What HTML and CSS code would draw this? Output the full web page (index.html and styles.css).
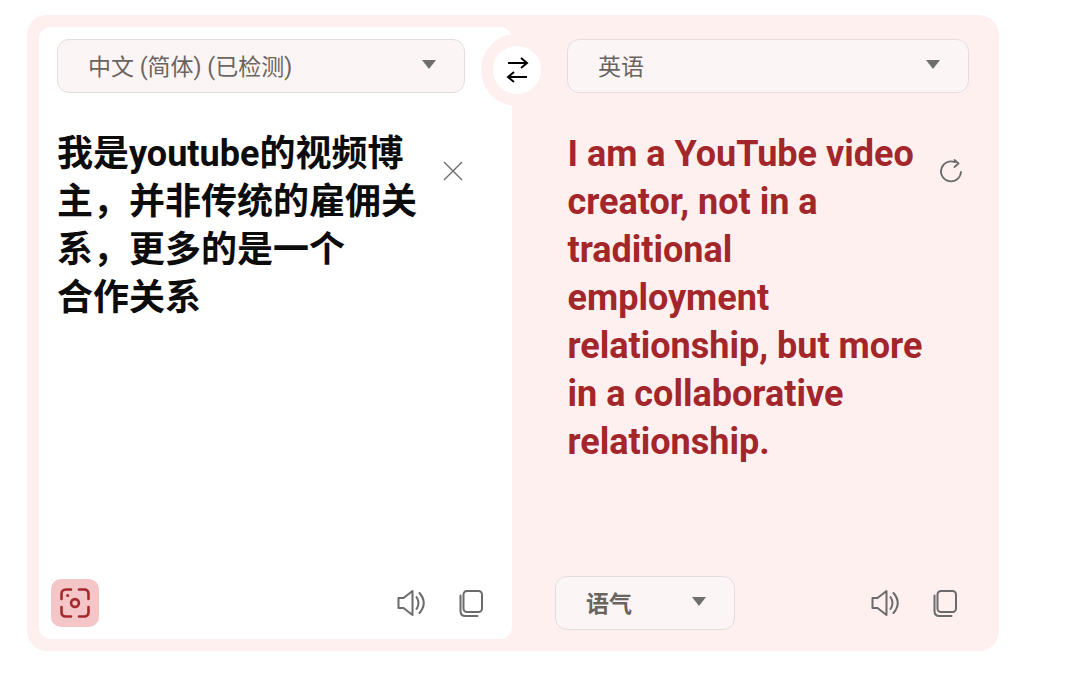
FILE: index.html
```html
<!DOCTYPE html>
<html lang="zh-CN">

<head>
    <meta charset="UTF-8">
    <title>翻译</title>
    <link rel="stylesheet" href="styles.css">
</head>

<body>

    <div class="card">

        <!-- source -->
        <div class="panel source">
            <div class="select">
                <span>中文 (简体) (已检测)</span>
                <span class="caret"></span>
            </div>
            <div class="content">
                <p class="text">我是youtube的视频博<br>主，并非传统的雇佣关<br>系，更多的是一个<br>合作关系</p>
                <svg class="side-icon clear" width="24" height="24" viewBox="0 0 24 24" fill="none" stroke="#6e6e6e" stroke-width="1.4">
                    <path d="M3 3 21 21M21 3 3 21" />
                </svg>
            </div>
            <div class="footer">
                <div class="capture">
                    <svg width="32" height="32" viewBox="0 0 32 32" fill="none" stroke="#a5282c" stroke-width="2.600" stroke-linecap="round">
                        <path d="M12 2.500H7Q2.500 2.500 2.500 7V12M20 2.500H25Q29.500 2.500 29.500 7V12M2.500 20V25Q2.500 29.500 7 29.500H12M29.500 20V25Q29.500 29.500 25 29.500H20" />
                        <circle cx="16" cy="16" r="3.900" />
                        <circle cx="8.700" cy="8.500" r="1.500" fill="#a5282c" stroke="none" />
                    </svg>
                </div>
                <div class="actions">
                    <svg width="30" height="30" viewBox="0 0 30 30" fill="none" stroke="#6b6b6b" stroke-width="2" stroke-linecap="round" stroke-linejoin="round">
                        <path d="M2.500 10H7.500L16.500 3V27L7.500 20H2.500Z" />
                        <path d="M20.500 9Q24.500 15 20.500 21" />
                        <path d="M23.500 5Q32 15 23.500 25" />
                    </svg>
                    <svg width="30" height="30" viewBox="0 0 30 30" fill="none" stroke="#6b6b6b" stroke-width="2" stroke-linecap="round" stroke-linejoin="round">
                        <rect x="7.500" y="3" width="18.500" height="21" rx="3.500" />
                        <path d="M4.500 7.500V23Q4.500 28 9.500 28H21.500" />
                    </svg>
                </div>
            </div>
        </div>

        <!-- result -->
        <div class="panel result">
            <div class="select">
                <span>英语</span>
                <span class="caret"></span>
            </div>
            <div class="content">
                <p class="text">I am a YouTube video creator, not in a traditional employment relationship, but more in a collaborative relationship.</p>
                <svg class="side-icon refresh" width="26" height="26" viewBox="0 0 26 26" fill="none" stroke="#6b6b6b" stroke-width="1.800" stroke-linecap="round" stroke-linejoin="round">
                    <path d="M17 3.200A10 10 0 1 0 23 13" />
                    <path d="M16.500 1 20.500 4.500 16.500 8" />
                </svg>
            </div>
            <div class="footer">
                <div class="select tone">
                    <span>语气</span>
                    <span class="caret"></span>
                </div>
                <div class="actions">
                    <svg width="30" height="30" viewBox="0 0 30 30" fill="none" stroke="#6b6b6b" stroke-width="2" stroke-linecap="round" stroke-linejoin="round">
                        <path d="M2.500 10H7.500L16.500 3V27L7.500 20H2.500Z" />
                        <path d="M20.500 9Q24.500 15 20.500 21" />
                        <path d="M23.500 5Q32 15 23.500 25" />
                    </svg>
                    <svg width="30" height="30" viewBox="0 0 30 30" fill="none" stroke="#6b6b6b" stroke-width="2" stroke-linecap="round" stroke-linejoin="round">
                        <rect x="7.500" y="3" width="18.500" height="21" rx="3.500" />
                        <path d="M4.500 7.500V23Q4.500 28 9.500 28H21.500" />
                    </svg>
                </div>
            </div>
        </div>

        <!-- swap button sits over both panels -->
        <div class="swap">
            <svg width="24" height="26" viewBox="0 0 24 26" fill="none" stroke="#000" stroke-width="2">
                <path d="M3 6H22M16 1 22 6 16 11" />
                <path d="M22 20H3M9 15 3 20 9 25" />
            </svg>
        </div>

    </div>

</body>

</html>
```

FILE: styles.css
```css
body {
    margin: 0;
    padding: 15px 0 0 27px;
    background-color: #fff;
    font-family: 'Roboto', 'Noto Sans CJK SC', sans-serif;
}

.card {
    position: relative;
    display: flex;
    width: 972px;
    height: 636px;
    box-sizing: border-box;
    padding: 12px 0 12px 12px;
    background-color: #fff0f0;
    border-radius: 20px;
}

.panel {
    display: flex;
    flex-direction: column;
    box-sizing: border-box;
}

.source {
    width: 473px;
    padding: 12px 26px 12px 12px;
    background-color: #fff;
    border-radius: 12px;
}

.result {
    flex: 1;
    padding: 12px 39px 9px 43px;
}

.select {
    display: flex;
    align-items: center;
    justify-content: space-between;
    box-sizing: border-box;
    height: 54px;
    padding: 0 28px 3px 30px;
    background-color: #fcf5f5;
    border: 1px solid #e5dddd;
    border-radius: 12px;
    font-size: 23px;
    color: #6a6460;
}

.source > .select {
    margin-left: 6px;
    margin-right: 21px;
}

.result > .select {
    margin-left: 12px;
    margin-right: -9px;
}

.caret {
    width: 0;
    height: 0;
    border-left: 7.500px solid transparent;
    border-right: 7.500px solid transparent;
    border-top: 9px solid #6e6e6e;
}

.content {
    flex: 1;
    display: flex;
    justify-content: space-between;
    align-items: flex-start;
    padding-top: 37px;
}

.source .content {
    padding-left: 6px;
}

.result .content {
    padding-left: 12.500px;
    margin-right: -9px;
}

.text {
    margin: 0;
    font-size: 36px;
    font-weight: 700;
    line-height: 48px;
}

.source .text {
    color: #0c0c0c;
    white-space: nowrap;
}

.result .text {
    width: 365px;
    color: #a3262a;
}

.side-icon {
    flex: none;
}

.clear {
    margin-right: 21px;
    margin-top: 29px;
}

.refresh {
    margin-top: 29px;
    margin-right: 5px;
}

.footer {
    display: flex;
    align-items: center;
    justify-content: space-between;
}

.capture {
    display: flex;
    align-items: center;
    justify-content: center;
    width: 48px;
    height: 48px;
    background-color: #f5c6c7;
    border-radius: 10px;
}

.actions {
    display: flex;
    gap: 30px;
}

.tone {
    width: 180px;
    font-weight: 700;
}

.swap {
    position: absolute;
    left: 454px;
    top: 19px;
    display: flex;
    align-items: center;
    justify-content: center;
    width: 48px;
    height: 48px;
    background-color: #fff;
    border: 12.500px solid #fff0f0;
    border-radius: 50%;
}
```
